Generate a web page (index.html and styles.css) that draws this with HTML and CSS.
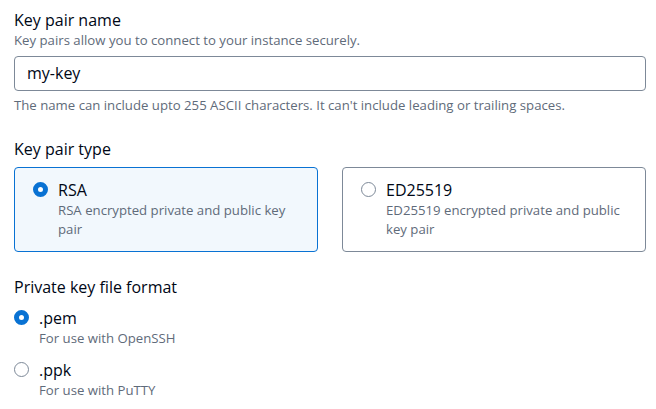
FILE: index.html
```html
<!DOCTYPE html>
<html>
<head>
<meta charset="utf-8">
<link rel="stylesheet" href="styles.css">
</head>
<body>
<div class="form">
  <div class="field field-name">
    <div class="label">Key pair name</div>
    <div class="desc">Key pairs allow you to connect to your instance securely.</div>
    <div class="input">my-key</div>
    <div class="constraint">The name can include upto 255 ASCII characters. It can't include leading or trailing spaces.</div>
  </div>

  <div class="field field-type">
    <div class="label">Key pair type</div>
    <div class="tiles">
      <div class="tile selected">
        <span class="radio checked"></span>
        <div class="tile-text">
          <div class="opt-title">RSA</div>
          <div class="opt-desc">RSA encrypted private and public key pair</div>
        </div>
      </div>
      <div class="tile">
        <span class="radio"></span>
        <div class="tile-text">
          <div class="opt-title">ED25519</div>
          <div class="opt-desc">ED25519 encrypted private and public key pair</div>
        </div>
      </div>
    </div>
  </div>

  <div class="field field-format">
    <div class="label">Private key file format</div>
    <div class="options">
      <div class="option">
        <span class="radio checked"></span>
        <div class="tile-text">
          <div class="opt-title">.pem</div>
          <div class="opt-desc">For use with OpenSSH</div>
        </div>
      </div>
      <div class="option">
        <span class="radio"></span>
        <div class="tile-text">
          <div class="opt-title">.ppk</div>
          <div class="opt-desc">For use with PuTTY</div>
        </div>
      </div>
    </div>
  </div>
</div>
</body>
</html>
```

FILE: styles.css
```css
* { box-sizing: border-box; }
html, body { margin: 0; padding: 0; background: #ffffff; }
body {
  font-family: "Open Sans", "Noto Sans", sans-serif;
  color: #000716;
}
.form {
  width: 632px;
  margin-left: 14px;
  padding-top: 9px;
}
.label {
  font-size: 16px;
  line-height: 22px;
  color: #000716;
}
.desc, .constraint, .opt-desc {
  font-size: 13.2px;
  line-height: 19px;
  color: #5f6b7a;
}
.input {
  margin-top: 6px;
  height: 35px;
  border: 1px solid #7d8998;
  border-radius: 4px;
  padding: 0 12px;
  font-size: 16px;
  line-height: 33px;
  color: #000716;
}
.constraint { margin-top: 5px; }
.field-type { margin-top: 23px; }
.tiles {
  margin-top: 7px;
  display: grid;
  grid-template-columns: 1fr 1fr;
  gap: 24px;
}
.tile {
  display: flex;
  align-items: flex-start;
  gap: 10px;
  height: 85px;
  border: 1px solid #7d8998;
  border-radius: 4px;
  padding: 11px 16px 0 18px;
}
.tile.selected {
  border-color: #0972d3;
  background: #f2f8fd;
}
.radio {
  flex: none;
  width: 15px;
  height: 15px;
  margin-top: 3px;
  border-radius: 50%;
  border: 1.5px solid #7d8998;
  background: #fff;
}
.radio.checked {
  border: 5px solid #0972d3;
}
.opt-title {
  font-size: 16px;
  line-height: 22px;
  color: #000716;
}
.field-format { margin-top: 24px; }
.options {
  margin-top: 9px;
  display: flex;
  flex-direction: column;
  gap: 11px;
}
.option {
  display: flex;
  align-items: flex-start;
  gap: 10px;
}
```
